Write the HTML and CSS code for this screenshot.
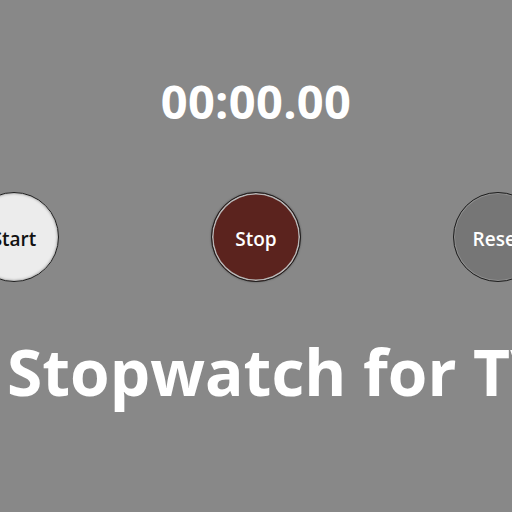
FILE: index.html
```html
<!DOCTYPE html>
<html>
<head>
<meta charset="utf-8">
<link rel="stylesheet" href="styles.css">
</head>
<body>
<main class="screen">
  <div class="timer">00:00.00</div>
  <div class="buttons">
    <button class="btn btn-start">Start</button>
    <button class="btn btn-stop">Stop</button>
    <button class="btn btn-reset">Reset</button>
  </div>
  <h1 class="title">Stopwatch for TV</h1>
</main>
</body>
</html>
```
FILE: styles.css
```css
html, body {
  margin: 0;
  padding: 0;
  width: 512px;
  height: 512px;
  overflow: hidden;
  background: #888888;
}
.screen {
  display: flex;
  flex-direction: column;
  align-items: center;
  width: 512px;
  height: 512px;
  font-family: "Open Sans", "DejaVu Sans", sans-serif;
  color: #ffffff;
}
.timer {
  margin-top: 75px;
  font-size: 47px;
  font-weight: 700;
  line-height: 52px;
  letter-spacing: 0.3px;
}
.buttons {
  display: flex;
  justify-content: center;
  gap: 152px;
  margin-top: 65px;
}
.btn {
  flex: 0 0 auto;
  width: 90px;
  height: 90px;
  border-radius: 50%;
  border: 1.5px solid #1e1e1e;
  box-shadow: inset 0 0 0 1.5px #b8b8b8, 0 0 2px rgba(0,0,0,0.4);
  font-family: "Open Sans", "DejaVu Sans", sans-serif;
  font-size: 19px;
  font-weight: 600;
  padding: 4px 0 0 0;
}
.btn-start {
  background: #ececec;
  color: #111111;
  box-shadow: inset 0 0 3px rgba(0,0,0,0.5);
}
.btn-stop {
  background: #5b231e;
  color: #ffffff;
}
.btn-reset {
  background: #767676;
  color: #ffffff;
  box-shadow: inset 0 0 0 1px #8f8f8f;
}
.title {
  align-self: flex-start;
  margin: 50px 0 0 7px;
  font-size: 64px;
  font-weight: 700;
  line-height: 80px;
  white-space: nowrap;
}
```
